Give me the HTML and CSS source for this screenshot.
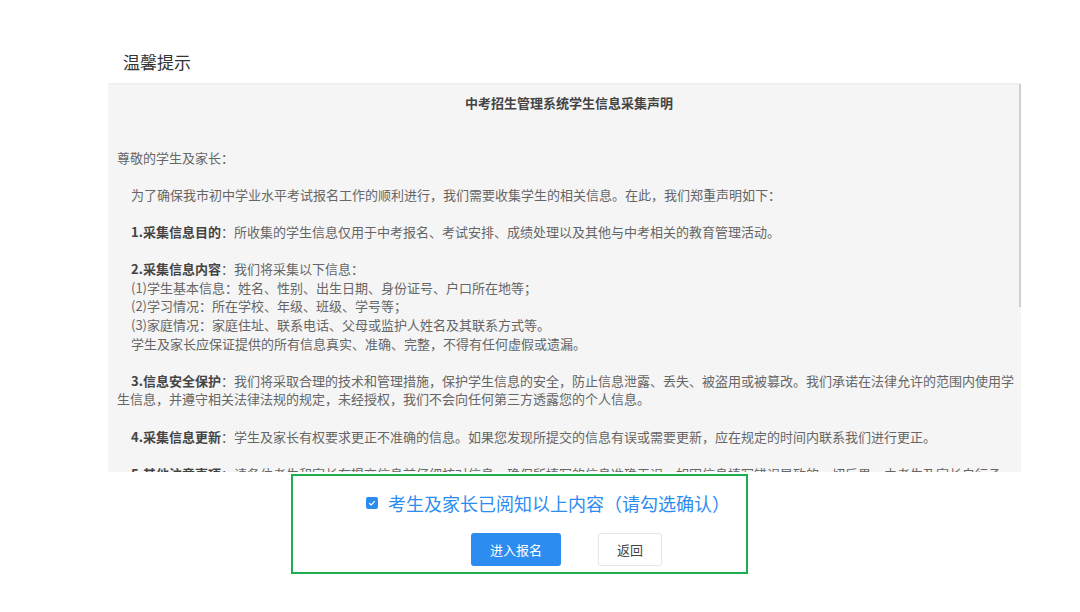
FILE: index.html
```html
<!DOCTYPE html>
<html lang="zh-CN">
<head>
<meta charset="utf-8">
<title>温馨提示</title>
<link rel="stylesheet" href="styles.css">
</head>
<body>
<div class="page">
  <div class="title">温馨提示</div>
  <div class="panel">
    <div class="doc">
      <div class="doc-title">中考招生管理系统学生信息采集声明</div>
      <p class="greet">尊敬的学生及家长：</p>
      <p class="ind">为了确保我市初中学业水平考试报名工作的顺利进行，我们需要收集学生的相关信息。在此，我们郑重声明如下：</p>
      <p class="ind"><b>1.采集信息目的</b>：所收集的学生信息仅用于中考报名、考试安排、成绩处理以及其他与中考相关的教育管理活动。</p>
      <p class="block"><b>2.采集信息内容</b>：我们将采集以下信息：<br>(1)学生基本信息：姓名、性别、出生日期、身份证号、户口所在地等；<br>(2)学习情况：所在学校、年级、班级、学号等；<br>(3)家庭情况：家庭住址、联系电话、父母或监护人姓名及其联系方式等。<br>学生及家长应保证提供的所有信息真实、准确、完整，不得有任何虚假或遗漏。</p>
      <p class="ind"><b>3.信息安全保护</b>：我们将采取合理的技术和管理措施，保护学生信息的安全，防止信息泄露、丢失、被盗用或被篡改。我们承诺在法律允许的范围内使用学生信息，并遵守相关法律法规的规定，未经授权，我们不会向任何第三方透露您的个人信息。</p>
      <p class="ind"><b>4.采集信息更新</b>：学生及家长有权要求更正不准确的信息。如果您发现所提交的信息有误或需要更新，应在规定的时间内联系我们进行更正。</p>
      <p class="ind"><b>5.其他注意事项</b>：请各位考生和家长在提交信息前仔细核对信息，确保所填写的信息准确无误。如因信息填写错误导致的一切后果，由考生及家长自行承担，特此声明。</p>
    </div>
    <div class="thumb"></div>
  </div>
  <div class="confirm">
    <label class="check-row">
      <span class="checkbox"><svg viewBox="0 0 12 12" width="12" height="12"><path d="M3.2 6.2 L5.2 8 L8.8 4.2" fill="none" stroke="#fff" stroke-width="1.2"/></svg></span>
      <span class="check-text">考生及家长已阅知以上内容（请勾选确认）</span>
    </label>
    <div class="btns">
      <button class="btn primary">进入报名</button>
      <button class="btn plain">返回</button>
    </div>
  </div>
</div>
</body>
</html>
```
FILE: styles.css
```css
html, body {
  margin: 0;
  padding: 0;
  background: #fff;
  font-family: "Noto Sans CJK SC", "Liberation Sans", sans-serif;
}
.page {
  width: 1080px;
  height: 612px;
  overflow: hidden;
  padding-top: 50px;
  box-sizing: border-box;
}
.title {
  margin-left: 123px;
  font-size: 17px;
  line-height: 24px;
  color: #333;
}
.panel {
  position: relative;
  margin-top: 9px;
  margin-left: 108px;
  width: 913px;
  height: 389px;
  background: #f5f5f5;
  overflow: hidden;
  box-shadow: inset 0 2px 2px -1px #ececec;
}
.doc {
  padding: 11px 0 0 9px;
  font-size: 13px;
  line-height: 18.6px;
  color: #666;
}
.doc-title {
  text-align: center;
  font-weight: bold;
  color: #444;
  margin-bottom: 36px;
}
.doc p {
  margin: 0 0 18.6px 0;
}
.doc b {
  color: #444;
}
.ind {
  text-indent: 14px;
}
.doc .block {
  padding-left: 14px;
}
.thumb {
  position: absolute;
  right: 0;
  top: 1px;
  width: 2px;
  height: 223px;
  background: #cfcfcf;
}
.confirm {
  margin-top: 2px;
  margin-left: 291px;
  width: 457px;
  height: 100px;
  box-sizing: border-box;
  border: 2px solid #1eae50;
  padding: 14px 0 0 73px;
  background: #fff;
}
.check-row {
  display: flex;
  align-items: center;
  height: 26px;
}
.checkbox {
  width: 12px;
  height: 12px;
  border-radius: 2px;
  background: #2d8cf0;
  display: flex;
  align-items: center;
  justify-content: center;
}
.check-text {
  margin-left: 10px;
  font-size: 18px;
  color: #2d8cf0;
  line-height: 26px;
}
.btns {
  display: flex;
  gap: 37px;
  margin-top: 17px;
  margin-left: 105px;
}
.btn {
  height: 33px;
  border-radius: 3px;
  font-family: "Noto Sans CJK SC", "Liberation Sans", sans-serif;
  font-size: 13px;
  padding: 0;
  cursor: pointer;
}
.primary {
  width: 90px;
  background: #2d8cf0;
  border: none;
  color: #fff;
}
.plain {
  width: 64px;
  background: #fff;
  border: 1px solid #e6e6e6;
  color: #444;
}
```
